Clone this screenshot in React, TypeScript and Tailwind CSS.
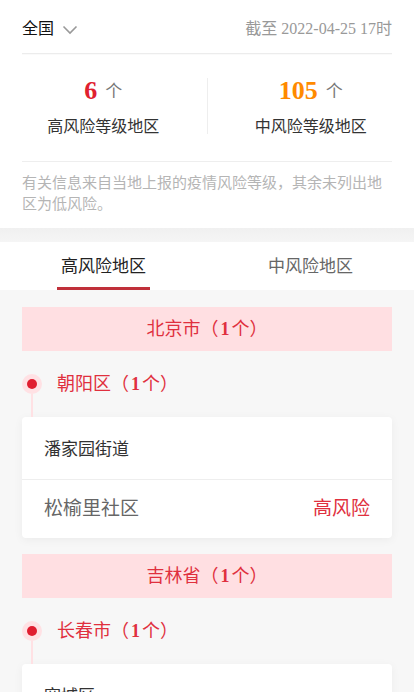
const FONT = "font-['Liberation_Serif','Noto_Sans_CJK_SC',serif]";

type Area = { name: string; level: string };
type City = { name: string; count: number; streets: { name: string; areas: Area[] }[] };
type Province = { name: string; count: number; cities: City[] };

const PROVINCES: Province[] = [
  {
    name: "北京市",
    count: 1,
    cities: [
      {
        name: "朝阳区",
        count: 1,
        streets: [{ name: "潘家园街道", areas: [{ name: "松榆里社区", level: "高风险" }] }],
      },
    ],
  },
  {
    name: "吉林省",
    count: 1,
    cities: [
      {
        name: "长春市",
        count: 1,
        streets: [{ name: "宽城区", areas: [{ name: "团山街道", level: "高风险" }] }],
      },
    ],
  },
];

function Chevron() {
  return (
    <svg width="16" height="10" viewBox="0 0 16 10" className="ml-2 mt-0.5">
      <path d="M1.5 1.5 L8 8 L14.5 1.5" fill="none" stroke="#999" strokeWidth="1.6" />
    </svg>
  );
}

function Stat({ value, color, label }: { value: number; color: string; label: string }) {
  return (
    <div className="flex flex-1 flex-col items-center">
      <div className="flex h-[36px] items-center">
        <span className={`text-[26px] font-bold leading-none ${color}`}>{value}</span>
        <span className="ml-2 text-[17px] leading-none text-[#777]">个</span>
      </div>
      <div className="mt-[6px] text-[16px] leading-[24px] text-[#333]">{label}</div>
    </div>
  );
}

function CityBlock({ city }: { city: City }) {
  return (
    <div>
      <div className="flex h-[66px] items-center">
        <div className="relative flex h-[20px] w-[20px] items-center justify-center rounded-full bg-[#ffe1e4]">
          <div className="h-[10px] w-[10px] rounded-full bg-[#e01e30]" />
        </div>
        <span className="ml-[15px] text-[18px] text-[#e0303e]">
          {city.name}（<b className="mx-[2px] font-bold">{city.count}</b>个）
        </span>
      </div>
      <div className="relative">
        <div className="absolute left-[9px] top-[-23px] h-[23px] w-[2px] bg-[#ffe1e4]" />
      </div>
      {city.streets.map((s) => (
        <div key={s.name} className="rounded-[4px] bg-white shadow-[0_2px_10px_rgba(0,0,0,0.05)]">
          <div className="flex h-[63px] items-center border-b border-[#eeeeee] px-[22px] pt-[3px] text-[17px] text-[#333]">
            {s.name}
          </div>
          {s.areas.map((a) => (
            <div key={a.name} className="flex h-[58px] items-center justify-between px-[22px] text-[19px]">
              <span className="text-[#666]">{a.name}</span>
              <span className="text-[#e0303e]">{a.level}</span>
            </div>
          ))}
        </div>
      ))}
    </div>
  );
}

export default function App() {
  return (
    <div className={`min-h-[692px] w-full bg-[#f7f7f7] ${FONT}`}>
      <div className="bg-white px-[22px]">
        <div className="flex h-[54px] items-center justify-between border-b border-[#ececec] pt-[4px] shadow-[0_1px_1px_rgba(0,0,0,0.02)]">
          <div className="flex items-center text-[16px] text-[#111]">
            全国
            <Chevron />
          </div>
          <div className="text-[16px] text-[#999]">截至 2022-04-25 17时</div>
        </div>
        <div className="-mx-[22px] flex h-[107px] items-center pb-[3px]">
          <Stat value={6} color="text-[#e0202f]" label="高风险等级地区" />
          <div className="h-[56px] w-px bg-[#eeeeee]" />
          <Stat value={105} color="text-[#ff8a00]" label="中风险等级地区" />
        </div>
        <div className="border-t border-[#eeeeee] pb-[13px] pt-[11px] text-[15px] leading-[21px] text-[#b5b5b5]">
          有关信息来自当地上报的疫情风险等级，其余未列出地区为低风险。
        </div>
      </div>
      <div className="h-[14px] bg-gradient-to-b from-[#f0f0f0] to-[#f5f5f5]" />
      <div className="flex h-[48px] bg-white">
        <div className="flex flex-1 justify-center">
          <div className="flex flex-col items-center justify-between">
            <span className="mt-[12px] text-[17px] text-[#222]">高风险地区</span>
            <span className="h-[3px] w-[93px] bg-[#c0303a]" />
          </div>
        </div>
        <div className="flex flex-1 justify-center">
          <span className="mt-[12px] text-[17px] text-[#666]">中风险地区</span>
        </div>
      </div>
      <div className="px-[22px] pt-[17px]">
        {PROVINCES.map((p) => (
          <div key={p.name} className="mb-[16px]">
            <div className="flex h-[44px] items-center justify-center bg-[#ffdfe2] text-[18px] text-[#e0303e]">
              {p.name}（<b className="mx-[2px] font-bold">{p.count}</b>个）
            </div>
            {p.cities.map((c) => (
              <CityBlock key={c.name} city={c} />
            ))}
          </div>
        ))}
      </div>
    </div>
  );
}
